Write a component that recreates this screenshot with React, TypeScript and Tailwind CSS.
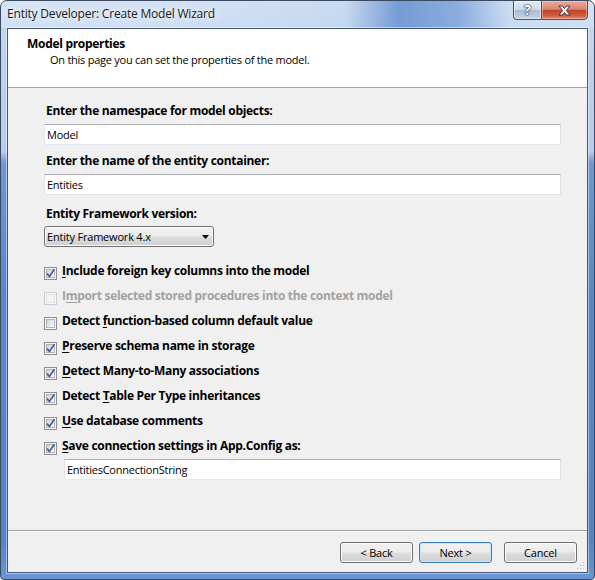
import React from "react";

const font = "font-['Open_Sans','Noto_Sans',sans-serif]";

function Field({ value, className = "" }: { value: string; className?: string }) {
  return (
    <div
      className={`h-[21px] flex items-center pl-[2px] bg-white border border-t-[#abadb3] border-l-[#e2e3ea] border-r-[#dbdfe6] border-b-[#e3e9ef] text-[11px] leading-[16px] tracking-[-0.25px] text-black ${className}`}
    >
      {value}
    </div>
  );
}

function Label({ children, className = "" }: { children: React.ReactNode; className?: string }) {
  return (
    <div className={`pl-[2px] text-[12px] leading-[16px] font-bold tracking-[-0.3px] text-black ${className}`}>
      {children}
    </div>
  );
}

function CheckBox({ checked, disabled }: { checked?: boolean; disabled?: boolean }) {
  return (
    <span
      className={`relative mt-[4px] block w-[13px] h-[13px] shrink-0 border p-[1px] ${
        disabled ? "border-[#cbcbcb] bg-[#f8f8f8]" : "border-[#8e8f8f] bg-[#f5f5f5]"
      }`}
    >
      <span
        className={`block w-full h-full border ${
          disabled
            ? "border-[#e3e3e3] bg-[#f3f3f3]"
            : "border-[#b0b4ba] bg-[linear-gradient(135deg,#cdd1d6_0%,#e6e8ea_50%,#fbfbfb_100%)]"
        }`}
      />
      {checked && (
        <svg className="absolute left-[-1px] top-[-1px]" width="13" height="13" viewBox="0 0 13 13">
          <path d="M3 6.6 L5.4 9.4 L10.4 2.2" stroke="#4a5e93" strokeWidth="1.7" fill="none" strokeLinejoin="round" />
        </svg>
      )}
    </span>
  );
}

function Option({
  checked,
  disabled,
  children,
}: {
  checked?: boolean;
  disabled?: boolean;
  children: React.ReactNode;
}) {
  return (
    <div className="h-[16px] flex items-start gap-[5px]">
      <CheckBox checked={checked} disabled={disabled} />
      <span
        className={`text-[12px] leading-[16px] font-bold tracking-[-0.3px] ${
          disabled ? "text-[#a2a2a2]" : "text-black"
        }`}
      >
        {children}
      </span>
    </div>
  );
}

function Key({ children }: { children: React.ReactNode }) {
  return <span className="underline decoration-1 underline-offset-[2px]">{children}</span>;
}

function Button({
  children,
  isDefault,
  className = "",
}: {
  children: React.ReactNode;
  isDefault?: boolean;
  className?: string;
}) {
  return (
    <div
      className={`w-[73px] h-[21px] rounded-[3px] border flex items-center justify-center text-[11px] leading-[16px] tracking-[-0.2px] text-black bg-[linear-gradient(to_bottom,#f2f2f2_0%,#ebebeb_48%,#dddddd_52%,#cfcfcf_100%)] ${
        isDefault
          ? "border-[#3c7fb1] shadow-[inset_0_0_0_1px_#bfe6fb]"
          : "border-[#707070] shadow-[inset_0_0_0_1px_#fbfbfb]"
      } ${className}`}
    >
      {children}
    </div>
  );
}

export default function App() {
  return (
    <div className={`w-[595px] h-[580px] bg-white ${font}`}>
      <div className="relative w-full h-full rounded-t-[7px] rounded-b-[4px] border border-[#3b4a60] px-[6px] pb-[6px] flex flex-col overflow-hidden bg-[linear-gradient(to_bottom,#c9dbf1_0px,#bdd2ee_60px,#b7cded_150px,#6e98d5_162px,#5886c8_300px,#5583c7_540px,#6b97d6_580px)]">
        {/* caption bar */}
        <div className="-mx-[6px] px-[6px] h-[27px] flex items-start justify-between bg-[linear-gradient(to_right,rgba(255,255,255,0.25)_0%,rgba(255,255,255,0.15)_40%,rgba(90,135,205,0.0)_58%,rgba(90,135,205,0.75)_67%,rgba(90,135,205,0.55)_77%,rgba(255,255,255,0.1)_86%,rgba(255,255,255,0.2)_100%)]">
          <div className="pt-[5px] text-[12px] leading-[16px] tracking-[-0.2px] text-[#1a1a1a] [text-shadow:0_0_6px_rgba(255,255,255,0.95),0_0_12px_rgba(255,255,255,0.8)]">
            Entity Developer: Create Model Wizard
          </div>
          <div className="flex h-[20px] -mt-[1px]">
            <div className="w-[28px] h-full border border-[#44546d] border-r-0 rounded-bl-[4px] flex items-center justify-center bg-[linear-gradient(to_bottom,#e4ebf4_0%,#cdd9ea_48%,#a9bbd6_52%,#c5d4e9_100%)] shadow-[inset_0_0_0_1px_rgba(255,255,255,0.5)]">
              <span className="text-[14px] leading-[14px] font-bold text-white [text-shadow:0_0_1px_#2d3a4f,0_0_1px_#2d3a4f,0_0_2px_#2d3a4f]">
                ?
              </span>
            </div>
            <div className="w-[47px] h-full border border-[#44546d] rounded-br-[4px] flex items-center justify-center bg-[linear-gradient(to_bottom,#eaaa9b_0%,#d98672_46%,#c2432a_52%,#cf5a3c_80%,#e08a6c_100%)] shadow-[inset_0_0_0_1px_rgba(255,220,210,0.45)]">
              <svg width="13" height="11" viewBox="0 0 13 11">
                <path
                  d="M1 1 H4.5 L6.5 3.5 L8.5 1 H12 L8.3 5.5 L12 10 H8.5 L6.5 7.5 L4.5 10 H1 L4.7 5.5 Z"
                  fill="#ffffff"
                  stroke="#3a2b2b"
                  strokeWidth="0.9"
                  strokeLinejoin="round"
                />
              </svg>
            </div>
          </div>
        </div>

        {/* client area */}
        <div className="relative flex-1 flex flex-col border border-[#44567a] bg-[#f0f0f0] shadow-[0_0_0_1px_rgba(255,255,255,0.45)]">
          {/* page header */}
          <div className="h-[59px] bg-white border-b border-[#a0a0a0] pt-[7px] pl-[19px] leading-[16px] text-black">
            <div className="text-[12px] font-bold tracking-[-0.3px]">Model properties</div>
            <div className="pl-[23px] text-[11px] tracking-[-0.25px]">
              On this page you can set the properties of the model.
            </div>
          </div>

          {/* page body */}
          <div className="flex-1 flex flex-col pt-[15px] pl-[36px] pr-[26px]">
            <Label>Enter the namespace for model objects:</Label>
            <Field value="Model" className="mt-[5px]" />
            <Label className="mt-[8px]">Enter the name of the entity container:</Label>
            <Field value="Entities" className="mt-[5px]" />
            <Label className="mt-[11px]">Entity Framework version:</Label>
            <div className="mt-[4px] w-[170px] h-[21px] rounded-[3px] border border-[#707070] flex items-center justify-between pl-[2px] pr-[4px] text-[11px] leading-[16px] tracking-[-0.2px] text-black bg-[linear-gradient(to_bottom,#f2f2f2_0%,#ebebeb_48%,#dddddd_52%,#cfcfcf_100%)] shadow-[inset_0_0_0_1px_#fbfbfb]">
              <span>Entity Framework 4.x</span>
              <svg width="7" height="4" viewBox="0 0 7 4">
                <polygon points="0,0 7,0 3.5,4" fill="#000" />
              </svg>
            </div>

            <div className="mt-[16px] flex flex-col gap-[9px]">
              <Option checked>
                <Key>I</Key>nclude foreign key columns into the model
              </Option>
              <Option disabled>
                I<Key>m</Key>port selected stored procedures into the context model
              </Option>
              <Option>
                Detect <Key>f</Key>unction-based column default value
              </Option>
              <Option checked>
                <Key>P</Key>reserve schema name in storage
              </Option>
              <Option checked>
                <Key>D</Key>etect Many-to-Many associations
              </Option>
              <Option checked>
                Detect <Key>T</Key>able Per Type inheritances
              </Option>
              <Option checked>
                <Key>U</Key>se database comments
              </Option>
              <Option checked>
                <Key>S</Key>ave connection settings in App.Config as:
              </Option>
            </div>
            <Field value="EntitiesConnectionString" className="mt-[5px] ml-[20px]" />
          </div>

          {/* wizard buttons */}
          <div className="h-[42px] border-t border-[#a0a0a0] shadow-[inset_0_1px_0_#ffffff] flex justify-end items-start pt-[11px] pr-[10px]">
            <Button>&lt; Back</Button>
            <Button isDefault className="ml-[6px]">
              Next &gt;
            </Button>
            <Button className="ml-[12px]">Cancel</Button>
          </div>

          {/* size grip */}
          <svg className="absolute right-[2px] bottom-[2px]" width="8" height="8" viewBox="0 0 8 8">
            <rect x="6" y="0" width="1" height="1" fill="#b8b8b8" />
            <rect x="3" y="3" width="1" height="1" fill="#b8b8b8" />
            <rect x="6" y="3" width="1" height="1" fill="#b8b8b8" />
            <rect x="0" y="6" width="1" height="1" fill="#b8b8b8" />
            <rect x="3" y="6" width="1" height="1" fill="#b8b8b8" />
            <rect x="6" y="6" width="1" height="1" fill="#b8b8b8" />
          </svg>
        </div>
      </div>
    </div>
  );
}
